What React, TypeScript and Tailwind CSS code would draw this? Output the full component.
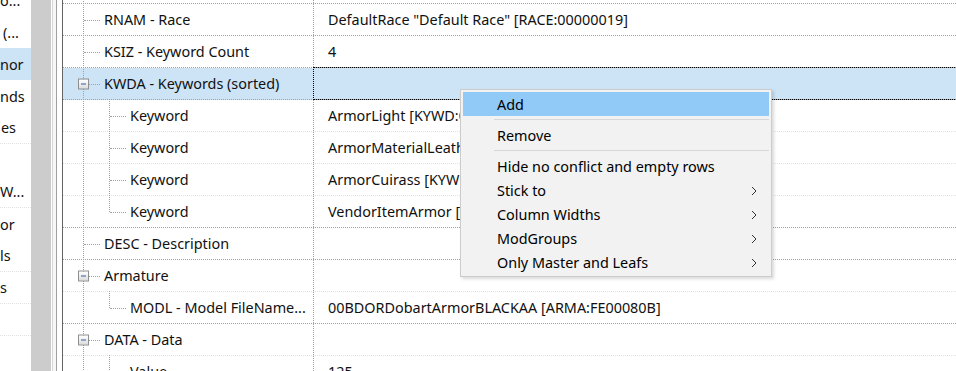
import React from "react"

type Row = {
  label: string
  value?: string
  level: 1 | 2
  box?: boolean
  last?: boolean
  selected?: boolean
  lightLine?: boolean
}

const rows: Row[] = [
  { label: "RNAM - Race", value: 'DefaultRace "Default Race" [RACE:00000019]', level: 1 },
  { label: "KSIZ - Keyword Count", value: "4", level: 1 },
  { label: "KWDA - Keywords (sorted)", level: 1, box: true, selected: true },
  { label: "Keyword", value: "ArmorLight [KYWD:0006BBD3]", level: 2, lightLine: true },
  { label: "Keyword", value: "ArmorMaterialLeather [KYWD:0006BBDB]", level: 2, lightLine: true },
  { label: "Keyword", value: "ArmorCuirass [KYWD:0006C0EC]", level: 2, lightLine: true },
  { label: "Keyword", value: "VendorItemArmor [KYWD:0008F959]", level: 2, last: true },
  { label: "DESC - Description", level: 1 },
  { label: "Armature", level: 1, box: true, lightLine: true },
  { label: "MODL - Model FileName...", value: "00BDORDobartArmorBLACKAA [ARMA:FE00080B]", level: 2, last: true },
  { label: "DATA - Data", level: 1, box: true, lightLine: true },
  { label: "Value", value: "125", level: 2, lightLine: true },
]

const leftItems = [
  { t: "o...", pl: "pl-0" },
  { t: "(...", pl: "pl-[3px]" },
  { t: "nor", pl: "pl-0", sel: true },
  { t: "nds", pl: "pl-0" },
  { t: "es", pl: "pl-px" },
  { t: "", pl: "pl-0" },
  { t: "W...", pl: "pl-0" },
  { t: "or", pl: "pl-0" },
  { t: "ls", pl: "pl-0" },
  { t: "s", pl: "pl-0" },
  { t: "", pl: "pl-0" },
  { t: "", pl: "pl-0" },
]

const menu = [
  { t: "Add", hot: true },
  { sep: true },
  { t: "Remove" },
  { sep: true },
  { t: "Hide no conflict and empty rows" },
  { t: "Stick to", sub: true },
  { t: "Column Widths", sub: true },
  { t: "ModGroups", sub: true },
  { t: "Only Master and Leafs", sub: true },
]

function ExpandBox() {
  return (
    <span className="absolute left-[15px] top-1/2 -translate-y-1/2 w-[11px] h-[11px] border border-[#8f8f8f] bg-gradient-to-b from-white to-[#dcdcdc] flex items-center justify-center">
      <span className="w-[5px] h-px bg-[#2c5aa8]" />
    </span>
  )
}

function TreeRow({ r }: { r: Row }) {
  const line = r.lightLine ? "border-[#e3e3e3]" : "border-[#a0a0a0]"
  return (
    <div className={`flex h-[32px] border-b border-dotted ${line} ${r.selected ? "bg-[#cde4f7]" : ""}`}>
      <div className="relative w-[250px] shrink-0 flex items-center">
        <span className="absolute left-[20px] -top-px -bottom-px border-l border-dotted border-[#a0a0a0]" />
        {r.level === 1 && (
          <span className={`absolute top-1/2 h-px border-t border-dotted border-[#a0a0a0] ${r.box ? "left-[26px] w-[11px]" : "left-[21px] w-[16px]"}`} />
        )}
        {r.box && <ExpandBox />}
        {r.level === 2 && (
          <>
            <span className={`absolute left-[46px] -top-px border-l border-dotted border-[#a0a0a0] ${r.last ? "h-[17px]" : "-bottom-px"}`} />
            <span className="absolute left-[47px] top-1/2 w-[16px] h-px border-t border-dotted border-[#a0a0a0]" />
          </>
        )}
        <span className={`${r.level === 1 ? "pl-[41px]" : "pl-[67px]"} pt-[2px] whitespace-nowrap text-[#111]`}>{r.label}</span>
      </div>
      <div
        className={`flex-1 flex items-center pl-[14px] pt-[2px] whitespace-nowrap text-[#111] border-l border-dotted ${
          r.selected ? "border border-black -my-px -mr-px" : "border-[#a0a0a0]"
        }`}
      >
        {r.value}
      </div>
    </div>
  )
}

export default function App() {
  return (
    <div
      className="flex h-[371px] w-[956px] overflow-hidden bg-white text-[14.4px] leading-none"
      style={{ fontFamily: '"Noto Sans", "Segoe UI", sans-serif' }}
    >
      <div className="w-[31px] shrink-0 overflow-hidden">
        <div className="-mt-[16px]">
          {leftItems.map((it, i) => (
            <div
              key={i}
              className={`h-[32px] flex items-center pt-[2px] whitespace-nowrap text-[#111] ${it.pl} ${it.sel ? "bg-[#cde4f7]" : ""} ${
                [4, 6, 8, 9, 10].includes(i) ? "border-b border-dotted border-[#e3e3e3]" : ""
              }`}
            >
              {it.t}
            </div>
          ))}
        </div>
      </div>
      <div className="w-[20px] shrink-0 bg-[#cccccc]" />
      <div className="w-px shrink-0 bg-white" />
      <div className="w-px shrink-0 bg-[#d9d9d9]" />
      <div className="w-[3px] shrink-0 bg-[#f7f7f7]" />
      <div className="w-px shrink-0 bg-[#a0a0a0]" />
      <div className="w-[5px] shrink-0 bg-white" />
      <div className="w-px shrink-0 bg-[#646464]" />
      <div className="relative flex-1">
        <div className="-mt-[28px]">
          <TreeRow r={{ label: "", level: 1 }} />
          {rows.map((r, i) => (
            <TreeRow key={i} r={r} />
          ))}
        </div>

        <div className="absolute left-[397px] top-[89px] w-[312px] border border-[#cccccc] bg-[#f2f2f2] py-[2px] px-[2px] shadow-[2px_2px_3px_rgba(0,0,0,0.15)]">
          {menu.map((m, i) =>
            m.sep ? (
              <div key={i} className="h-[7px] flex items-center pl-[31px]">
                <div className="h-px w-full bg-[#d7d7d7]" />
              </div>
            ) : (
              <div
                key={i}
                className={`h-[24px] flex items-center pl-[34px] pr-[12px] pt-[2px] text-black whitespace-nowrap ${m.hot ? "bg-[#91c9f7]" : ""}`}
              >
                <span className="flex-1">{m.t}</span>
                {m.sub && (
                  <svg width="6" height="10" viewBox="0 0 6 10" className="shrink-0">
                    <polyline points="1,1 5,5 1,9" fill="none" stroke="#333" strokeWidth="1" />
                  </svg>
                )}
              </div>
            )
          )}
        </div>
      </div>
    </div>
  )
}
